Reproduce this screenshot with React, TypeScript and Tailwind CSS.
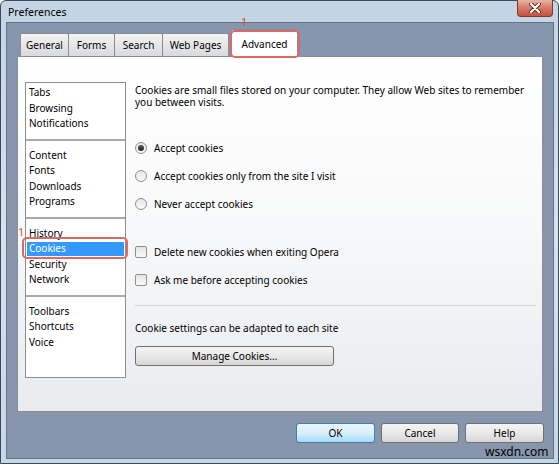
import React from "react";

const tabs = [
  { label: "General", w: "w-[49px]" },
  { label: "Forms", w: "w-[47px]" },
  { label: "Search", w: "w-[49px]" },
  { label: "Web Pages", w: "w-[67px]" },
];

const groups = [
  ["Tabs", "Browsing", "Notifications"],
  ["Content", "Fonts", "Downloads", "Programs"],
  ["History", "Cookies", "Security", "Network"],
  ["Toolbars", "Shortcuts", "Voice"],
];

function Radio({ checked, label }: { checked?: boolean; label: string }) {
  return (
    <div className="flex items-center h-[16px]">
      <span className="w-[12px] h-[12px] rounded-full border border-[#8e8f8f] bg-gradient-to-b from-[#e6e6e6] to-[#fbfbfb] flex items-center justify-center">
        {checked && <span className="w-[6px] h-[6px] rounded-full bg-gradient-to-b from-[#5d5d5d] to-[#1e1e1e]" />}
      </span>
      <span className="ml-[7px]">{label}</span>
    </div>
  );
}

function Check({ label }: { label: string }) {
  return (
    <div className="flex items-center h-[16px]">
      <span className="w-[12px] h-[12px] rounded-[2px] border border-[#8e8f8f] bg-gradient-to-b from-[#e4e4e4] to-[#fafafa]" />
      <span className="ml-[7px]">{label}</span>
    </div>
  );
}

function Button({ children, def, w }: { children: React.ReactNode; def?: boolean; w: string }) {
  return (
    <button
      className={
        def
          ? `${w} h-[20px] rounded-[3px] border border-[#3c7fb1] bg-gradient-to-b from-[#eaf6fd] via-[#d9f0fc] to-[#a7d9f5] text-black`
          : `${w} h-[20px] rounded-[3px] border border-[#707070] bg-gradient-to-b from-[#f4f4f4] via-[#e9e9e9] to-[#d6d6d6] text-black`
      }
    >
      {children}
    </button>
  );
}

export default function App() {
  return (
    <div className="relative w-[559px] h-[464px] overflow-hidden font-['Noto_Sans',sans-serif] text-[10px] text-black">
      <div className="w-full h-full flex flex-col border border-[#3a4a5a] rounded-t-[6px] bg-gradient-to-b from-[#c4d4e4] via-[#d6e2ee] to-[#c8d7e6]">
        {/* title bar */}
        <div className="h-[21px] flex items-center pl-[7px] pt-[2px] text-[10.5px]">Preferences</div>

        {/* client area */}
        <div className="ml-[5px] w-[548px] h-[437px] border border-[#63738a] bg-[#8796ad] flex flex-col">
          {/* tabs */}
          <div className="relative z-10 flex items-end h-[28px] mt-[6px] -mb-px pl-[13px]">
            {tabs.map((t, i) => (
              <div
                key={t.label}
                className={`${t.w} h-[23px] mb-px ${i > 0 ? "-ml-px" : ""} border border-b-0 border-[#898c95] rounded-t-[2px] bg-gradient-to-b from-[#f3f3f3] to-[#d9dadc] flex items-center justify-center`}
              >
                {t.label}
              </div>
            ))}
            <div className="w-[67px] h-[28px] ml-[2px] border border-b-0 border-[#898c95] rounded-t-[2px] bg-white flex items-center justify-center pt-[2px]">
              Advanced
            </div>
          </div>

          {/* panel */}
          <div className="ml-[10px] w-[526px] h-[356px] border border-[#898c95] bg-gradient-to-b from-white via-[#f7f8f9] to-[#e9ebef] flex pl-[7px] pt-[25px]">
            {/* left list */}
            <div className="shrink-0 w-[101px] h-[296px] border border-[#8c8f96] bg-white pt-[2px]">
              {groups.map((g, gi) => (
                <div key={gi}>
                  {gi > 0 && (
                    <div className="h-[15.6px] flex items-center">
                      <div className="w-full h-[2px] bg-[#a9a9a9]" />
                    </div>
                  )}
                  {g.map((item) =>
                    item === "Cookies" ? (
                      <div key={item} className="h-[15.6px] flex items-center mx-px">
                        <div className="w-full h-[14px] bg-[#3399ff] text-white pl-[2px] flex items-center">{item}</div>
                      </div>
                    ) : (
                      <div key={item} className="h-[15.6px] flex items-center pl-[3px]">
                        {item}
                      </div>
                    )
                  )}
                </div>
              ))}
            </div>

            {/* right content */}
            <div className="ml-[9px] min-w-0 flex-1 pr-[6px] flex flex-col">
              <div className="mt-[2px]">
                <div className="h-[12px] leading-[12px]">
                  Cookies are small files stored on your computer. They allow Web sites to remember
                </div>
                <div className="h-[12px] leading-[12px]">you between visits.</div>
              </div>
              <div className="mt-[32px] flex flex-col gap-[12px]">
                <Radio checked label="Accept cookies" />
                <Radio label="Accept cookies only from the site I visit" />
                <Radio label="Never accept cookies" />
              </div>
              <div className="mt-[32px] flex flex-col gap-[12px]">
                <Check label="Delete new cookies when exiting Opera" />
                <Check label="Ask me before accepting cookies" />
              </div>
              <div className="mt-[17px] h-px bg-[#d2d4d8]" />
              <div className="mt-[14px] h-[16px] flex items-center">Cookie settings can be adapted to each site</div>
              <div className="mt-[10px]">
                <Button w="w-[199px]">Manage Cookies...</Button>
              </div>
            </div>
          </div>

          {/* dialog buttons */}
          <div className="mt-[11px] flex justify-end gap-[6px] pr-[9px]">
            <Button def w="w-[79px]">OK</Button>
            <Button w="w-[78px]">Cancel</Button>
            <Button w="w-[79px]">Help</Button>
          </div>
        </div>
      </div>

      {/* close button */}
      <div className="absolute left-[517px] top-0 w-[36px] h-[17px] rounded-b-[4px] border border-t-0 border-[#7a3a30] bg-gradient-to-b from-[#eab2a4] via-[#d77a68] to-[#c5523f] flex items-center justify-center">
        <svg width="12" height="10" viewBox="0 0 12 10">
          <path d="M2 1 L10 9 M10 1 L2 9" stroke="#5a2820" strokeWidth="4" strokeLinecap="round" />
          <path d="M2 1 L10 9 M10 1 L2 9" stroke="#ffffff" strokeWidth="2.2" strokeLinecap="round" />
        </svg>
      </div>

      {/* annotations */}
      <div className="absolute z-20 left-[241px] top-[15px] text-[11px] leading-[14px] text-[#d9522a]">1</div>
      <div className="absolute z-20 left-[230px] top-[30px] w-[70px] h-[28px] border-2 border-[#d96a68] rounded-[5px]" />
      <div className="absolute z-20 left-[18px] top-[225px] text-[11px] leading-[14px] text-[#d9522a]">1</div>
      <div className="absolute z-20 left-[22px] top-[237px] w-[106px] h-[22px] border-2 border-[#d96a68] rounded-[5px]" />

      {/* watermark */}
      <div className="absolute z-20 left-[485px] top-[444px] text-[12px] leading-[16px] text-black">wsxdn.com</div>
    </div>
  );
}
